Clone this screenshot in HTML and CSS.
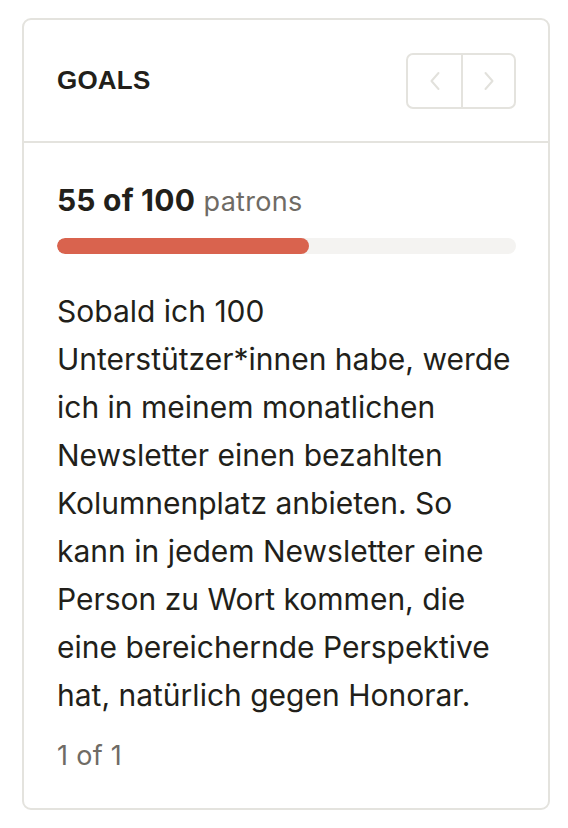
FILE: index.html
```html
<!DOCTYPE html>
<html lang="de">
<head>
<meta charset="utf-8">
<link rel="stylesheet" href="styles.css">
</head>
<body>
<section class="card">
  <header class="card-head">
    <h2 class="title">GOALS</h2>
    <div class="nav">
      <button class="nav-btn" aria-label="Previous">
        <svg width="14" height="22" viewBox="0 0 14 22"><path d="M10.5 3 L3.5 11 L10.5 19" fill="none" stroke="#e2e1dc" stroke-width="2" stroke-linecap="round" stroke-linejoin="round"/></svg>
      </button>
      <button class="nav-btn" aria-label="Next">
        <svg width="14" height="22" viewBox="0 0 14 22"><path d="M3.5 3 L10.5 11 L3.5 19" fill="none" stroke="#e2e1dc" stroke-width="2" stroke-linecap="round" stroke-linejoin="round"/></svg>
      </button>
    </div>
  </header>
  <div class="card-body">
    <p class="count"><strong>55 of 100</strong> <span class="unit">patrons</span></p>
    <div class="track"><div class="fill" style="width:55%"></div></div>
    <p class="desc">Sobald ich 100 Unterstützer*innen habe, werde ich in meinem monatlichen Newsletter einen bezahlten Kolumnenplatz anbieten. So kann in jedem Newsletter eine Person zu Wort kommen, die eine bereichernde Perspektive hat, natürlich gegen Honorar.</p>
    <p class="pager">1 of 1</p>
  </div>
</section>
</body>
</html>
```
FILE: styles.css
```css
* { box-sizing: border-box; }
html, body { margin: 0; background: #fff; }
body {
  padding: 18px 18px 19px 22px;
  font-family: Inter, "Noto Sans", sans-serif;
  color: #221f1a;
}
.card {
  width: 528px;
  border: 2px solid #e4e3de;
  border-radius: 9px;
}
.card-head {
  height: 123px;
  display: flex;
  align-items: center;
  justify-content: space-between;
  padding: 0 32px 0 33px;
  border-bottom: 2px solid #e4e3de;
}
.title {
  margin: 0;
  font-family: "Liberation Sans", Arial, sans-serif;
  font-weight: 700;
  font-size: 26px;
  letter-spacing: 0.2px;
}
.nav {
  display: flex;
  border: 2px solid #e4e3de;
  border-radius: 7px;
  height: 56px;
}
.nav-btn {
  width: 53px;
  height: 52px;
  background: none;
  border: 0;
  padding: 0;
  display: flex;
  align-items: center;
  justify-content: center;
}
.nav-btn + .nav-btn { border-left: 2px solid #e4e3de; }
.card-body {
  padding: 37px 30px 32px 33px;
}
.count {
  margin: 0;
  font-size: 30px;
  line-height: 40px;
}
.count strong { font-weight: 700; letter-spacing: 0.2px; }
.unit { color: #6f6b65; font-size: 27px; letter-spacing: 0.3px; }
.track {
  margin-top: 16px;
  height: 16px;
  margin-right: 2px;
  background: #f4f3f1;
  border-radius: 8px;
  overflow: hidden;
}
.fill {
  height: 100%;
  background: #d9634e;
  border-radius: 8px;
}
.desc {
  margin: 33px 0 0;
  font-size: 30px;
  line-height: 48px;
  letter-spacing: 0;
}
.pager {
  margin: 17px 0 0;
  font-size: 27px;
  line-height: 40px;
  color: #6f6b65;
  letter-spacing: 0.3px;
}
```
